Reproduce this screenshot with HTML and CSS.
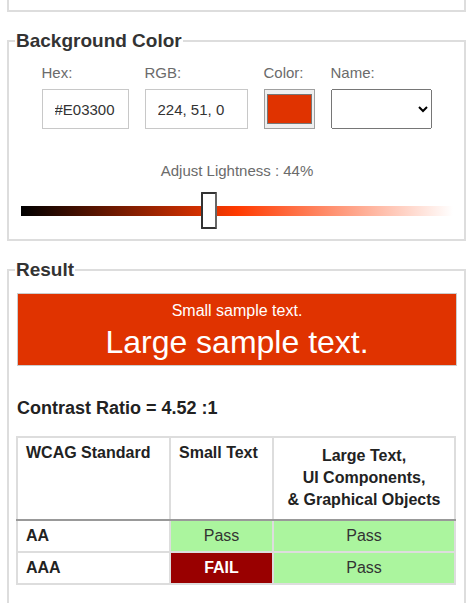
FILE: index.html
```html
<!DOCTYPE html>
<html lang="en">
<head>
<meta charset="utf-8">
<title>Contrast Checker</title>
<link rel="stylesheet" href="styles.css">
</head>
<body>
<div class="prev-panel"></div>

<fieldset class="panel panel-bg">
  <legend class="panel-title">Background Color</legend>
  <div class="field-row">
    <label class="field">
      <span class="field-label">Hex:</span>
      <input class="text-input hex-input" type="text" value="#E03300">
    </label>
    <label class="field">
      <span class="field-label">RGB:</span>
      <input class="text-input rgb-input" type="text" value="224, 51, 0">
    </label>
    <label class="field">
      <span class="field-label">Color:</span>
      <input class="color-input" type="color" value="#e03300">
    </label>
    <label class="field">
      <span class="field-label">Name:</span>
      <select class="name-select"><option></option></select>
    </label>
  </div>
  <div class="lightness">
    <div class="lightness-label">Adjust Lightness : 44%</div>
    <input class="lightness-slider" type="range" min="0" max="100" step="0.1" value="43.3">
  </div>
</fieldset>

<fieldset class="panel panel-result">
  <legend class="panel-title">Result</legend>
  <div class="sample">
    <p class="sample-small">Small sample text.</p>
    <p class="sample-large">Large sample text.</p>
  </div>
  <p class="ratio">Contrast Ratio = 4.52 :1</p>
  <table class="wcag">
    <thead>
      <tr>
        <th class="col-std">WCAG Standard</th>
        <th class="col-small">Small Text</th>
        <th class="col-large">Large Text,<br>UI Components,<br>&amp; Graphical Objects</th>
      </tr>
    </thead>
    <tbody>
      <tr>
        <td class="level">AA</td>
        <td class="pass">Pass</td>
        <td class="pass">Pass</td>
      </tr>
      <tr>
        <td class="level">AAA</td>
        <td class="fail">FAIL</td>
        <td class="pass">Pass</td>
      </tr>
    </tbody>
  </table>
</fieldset>
</body>
</html>
```

FILE: styles.css
```css
* {
  box-sizing: border-box;
}

html, body {
  background: #ffffff;
}

body {
  margin: 0 0 0 7px;
  font-family: "Liberation Sans", Arial, sans-serif;
  color: #222222;
  overflow: hidden;
}

.prev-panel {
  height: 12px;
  border: 2px solid #dddddd;
  border-top: none;
}

.panel {
  margin: 18px 0 0 0;
  min-width: 0;
  border: 2px solid #dddddd;
}

.panel-bg {
  padding: 12px 7px 10px 8px;
}

.panel-result {
  padding: 12px 7px 60px 8px;
}

.panel-title {
  margin-left: -2px;
  padding: 0 1px;
  font-size: 19px;
  line-height: 22px;
  font-weight: bold;
  color: #333333;
}

.field-row {
  display: flex;
  justify-content: center;
  gap: 16px;
  margin-left: -1px;
}

.field {
  display: flex;
  flex-direction: column;
  gap: 8px;
}

.field-label {
  font-size: 15px;
  line-height: 17px;
  color: #6b6b6b;
}

.text-input {
  height: 40px;
  margin: 0;
  padding: 0 12px;
  border: 1px solid #c8c8c8;
  font-family: "Liberation Sans", Arial, sans-serif;
  font-size: 15px;
  color: #333333;
  background: #ffffff;
}

.hex-input {
  width: 87px;
}

.rgb-input {
  width: 103px;
}

.color-input {
  width: 51px;
  height: 40px;
  margin: 0;
  padding: 0;
  border: 1px solid #a0a0a0;
  background: #efefef;
}

.color-input::-webkit-color-swatch-wrapper {
  padding: 4px 2px;
}

.color-input::-webkit-color-swatch {
  border: 1px solid #777777;
}

.name-select {
  width: 101px;
  height: 40px;
  margin: 0;
  font-family: "Liberation Sans", Arial, sans-serif;
  font-size: 15px;
}

.lightness {
  margin-top: 33px;
  display: flex;
  flex-direction: column;
  align-items: center;
  gap: 13px;
}

.lightness-label {
  font-size: 15px;
  line-height: 17px;
  color: #6b6b6b;
}

.lightness-slider {
  -webkit-appearance: none;
  appearance: none;
  display: block;
  width: 432px;
  height: 37px;
  margin: 0;
  background: transparent;
}

.lightness-slider::-webkit-slider-runnable-track {
  height: 10px;
  background: linear-gradient(to right, hsl(13.66, 100%, 0%), hsl(13.66, 100%, 50%), hsl(13.66, 100%, 100%));
}

.lightness-slider::-webkit-slider-thumb {
  -webkit-appearance: none;
  appearance: none;
  width: 16px;
  height: 37px;
  margin-top: -13.5px;
  background: #ffffff;
  border: 2px solid #333333;
  border-right-color: #666666;
  border-radius: 1px;
}

.sample {
  border: 1px solid #cccccc;
  background: #e03300;
  color: #ffffff;
  text-align: center;
  padding: 8px 0 5px;
}

.sample-small {
  margin: 0 0 4px;
  font-size: 16px;
  line-height: 18px;
}

.sample-large {
  margin: 0;
  font-size: 32px;
  line-height: 36px;
}

.ratio {
  margin: 31px 0 17px;
  font-size: 18px;
  line-height: 22px;
  font-weight: bold;
  color: #222222;
}

.wcag {
  width: 440px;
  margin-left: -1px;
  border-collapse: collapse;
  font-size: 16px;
}

.wcag th,
.wcag td {
  border: 2px solid #dddddd;
}

.wcag th {
  padding: 4px 8px 8px;
  line-height: 22px;
  font-weight: bold;
  text-align: left;
  vertical-align: top;
  color: #222222;
  border-bottom-color: #999999;
}

.wcag .col-std {
  width: 153px;
}

.wcag .col-small {
  width: 103px;
}

.wcag .col-large {
  padding-top: 7px;
  text-align: center;
  vertical-align: middle;
}

.wcag td {
  padding: 5px 8px;
  line-height: 20px;
}

.wcag .level {
  font-weight: bold;
  color: #222222;
}

.wcag .pass {
  background: #abf59e;
  color: #333333;
  text-align: center;
}

.wcag .fail {
  background: #990000;
  color: #ffffff;
  font-weight: bold;
  text-align: center;
}
```
